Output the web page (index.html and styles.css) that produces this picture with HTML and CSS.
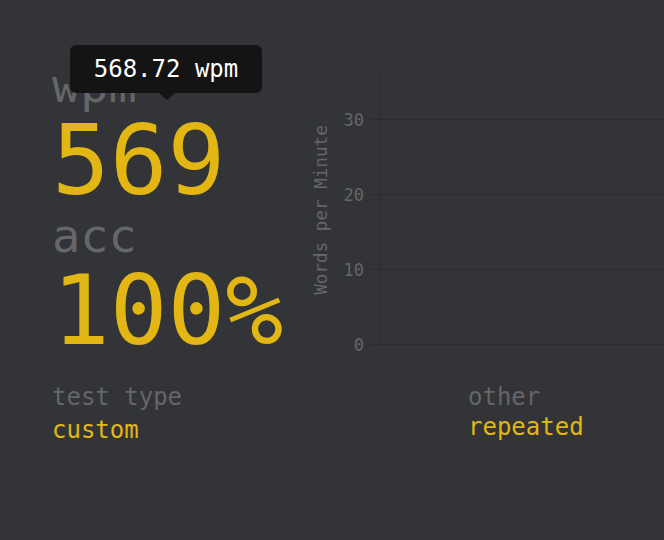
FILE: index.html
```html
<!DOCTYPE html>
<html>
<head>
<meta charset="utf-8">
<link rel="stylesheet" href="styles.css">
</head>
<body>
<div class="page">
  <div class="result">
    <div class="stats">
      <div class="group">
        <div class="top">wpm</div>
        <div class="bottom">569</div>
      </div>
      <div class="group">
        <div class="top">acc</div>
        <div class="bottom">100%</div>
      </div>
    </div>
    <div class="chart">
      <svg class="chart-svg" width="364" height="300" viewBox="0 0 364 300">
        <g class="grid">
          <line x1="70" y1="59.5" x2="364" y2="59.5"/>
          <line x1="70" y1="134.5" x2="364" y2="134.5"/>
          <line x1="70" y1="209.5" x2="364" y2="209.5"/>
          <line x1="70" y1="284.5" x2="364" y2="284.5"/>
          <line x1="80.5" y1="15" x2="80.5" y2="284.5"/>
        </g>
        <g class="ticks">
          <text x="64" y="65.5">30</text>
          <text x="64" y="140.5">20</text>
          <text x="64" y="215.5">10</text>
          <text x="64" y="290.5">0</text>
        </g>
        <text class="axis-title" transform="translate(27 150) rotate(-90)">Words per Minute</text>
      </svg>
    </div>
  </div>
  <div class="more">
    <div class="info">
      <div class="label">test type</div>
      <div class="value">custom</div>
    </div>
    <div class="info other">
      <div class="label">other</div>
      <div class="value">repeated</div>
    </div>
  </div>
  <div class="tooltip">568.72 wpm</div>
</div>
</body>
</html>
```
FILE: styles.css
```css
html, body {
  margin: 0;
  padding: 0;
  background: #323437;
}
body {
  width: 664px;
  height: 540px;
  overflow: hidden;
  font-family: "DejaVu Sans Mono", "Liberation Mono", monospace;
}
.page {
  position: relative;
  padding: 62px 0 0 52px;
}
.result {
  display: flex;
  align-items: flex-start;
}
.stats {
  width: 248px;
  flex: none;
}
.group .top {
  font-size: 47px;
  line-height: 48px;
  color: #646669;
}
.group .bottom {
  font-size: 96px;
  line-height: 102px;
  color: #e2b714;
}
.chart {
  margin-top: -2px;
  flex: none;
}
.chart-svg {
  display: block;
}
.grid line {
  stroke: #2a2c2f;
  stroke-width: 1;
}
.ticks text {
  fill: #646669;
  font-family: "DejaVu Sans Mono", monospace;
  font-size: 17px;
  text-anchor: end;
}
.axis-title {
  fill: #646669;
  font-family: "DejaVu Sans Mono", monospace;
  font-size: 17.6px;
  text-anchor: middle;
}
.more {
  display: flex;
  margin-top: 19px;
}
.info {
  width: 416px;
}
.info.other {
  width: auto;
}
.info .label {
  font-size: 24px;
  line-height: 32px;
  color: #646669;
}
.info .value {
  font-size: 24px;
  line-height: 34px;
  color: #e2b714;
}
.info.other .value {
  line-height: 28px;
}
.tooltip {
  position: absolute;
  left: 70px;
  top: 45px;
  width: 192px;
  height: 48px;
  box-sizing: border-box;
  border-radius: 6px;
  background: #141414;
  color: #ffffff;
  font-size: 24px;
  line-height: 48px;
  text-align: center;
}
.tooltip::after {
  content: "";
  position: absolute;
  left: 89px;
  top: 48px;
  border-left: 8px solid transparent;
  border-right: 8px solid transparent;
  border-top: 7px solid #141414;
}
```
